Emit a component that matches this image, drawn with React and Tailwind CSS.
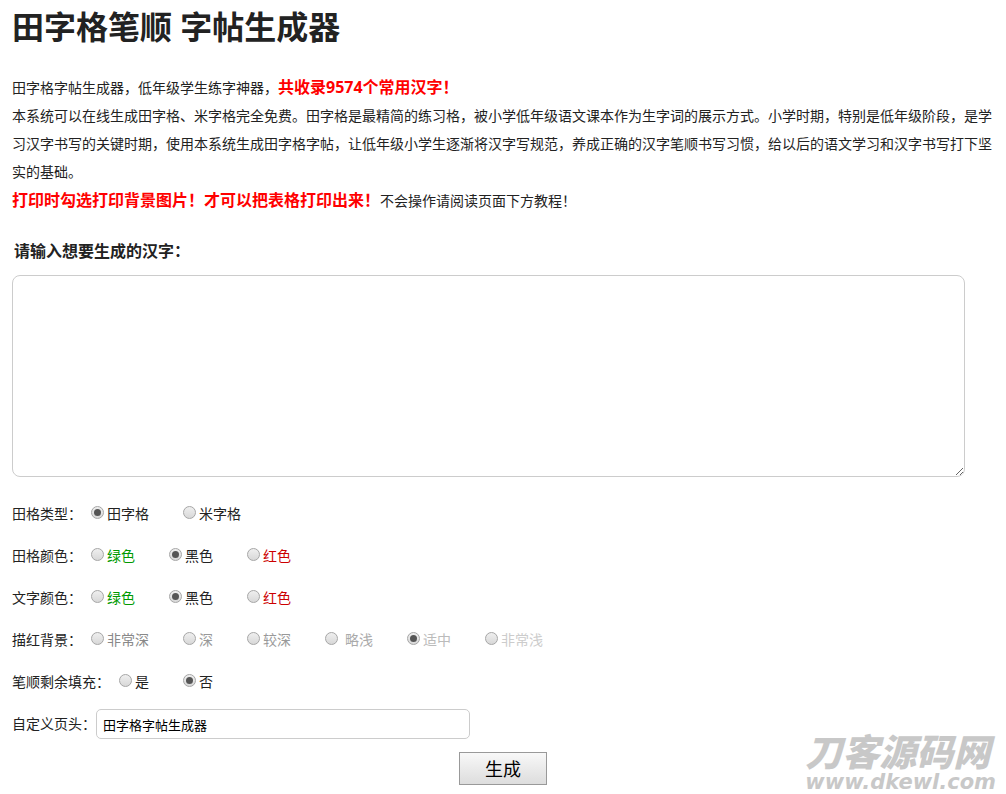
import React, { useState } from "react";

const PAGE_FONT = "font-['Noto_Sans','Noto_Sans_CJK_SC',sans-serif]";

const GROUPS = [
  {
    name: "gridType",
    label: "田格类型：",
    options: [
      { value: "tian", text: "田字格" },
      { value: "mi", text: "米字格" },
    ],
  },
  {
    name: "gridColor",
    label: "田格颜色：",
    options: [
      { value: "green", text: "绿色", color: "text-[#009900]" },
      { value: "black", text: "黑色" },
      { value: "red", text: "红色", color: "text-[#cc0000]" },
    ],
  },
  {
    name: "textColor",
    label: "文字颜色：",
    options: [
      { value: "green", text: "绿色", color: "text-[#009900]" },
      { value: "black", text: "黑色" },
      { value: "red", text: "红色", color: "text-[#cc0000]" },
    ],
  },
  {
    name: "shade",
    label: "描红背景：",
    options: [
      { value: "1", text: "非常深", color: "text-[#888888]" },
      { value: "2", text: "深", color: "text-[#999999]" },
      { value: "3", text: "较深", color: "text-[#999999]" },
      { value: "4", text: "略浅", color: "text-[#aaaaaa]", spaced: true },
      { value: "5", text: "适中", color: "text-[#bbbbbb]" },
      { value: "6", text: "非常浅", color: "text-[#cccccc]" },
    ],
  },
  {
    name: "fill",
    label: "笔顺剩余填充：",
    options: [
      { value: "yes", text: "是" },
      { value: "no", text: "否" },
    ],
  },
];

function RadioRow({ group, value, onChange }) {
  return (
    <div role="radiogroup" aria-label={group.label} className="flex flex-wrap items-center min-h-[42px]">
      <span className="mr-[9px]">{group.label}</span>
      <div className="flex flex-wrap gap-x-[34px]">
        {group.options.map((o) => (
          <label key={o.value} className={`flex items-center ${o.spaced ? "gap-[7px]" : "gap-[3px]"} ${o.color || ""}`}>
            <input
              type="radio"
              name={group.name}
              value={o.value}
              checked={value === o.value}
              onChange={() => onChange(group.name, o.value)}
              className="appearance-none w-[13px] h-[13px] mb-1 shrink-0 rounded-full border border-[#a6a6a6] bg-linear-to-b from-[#efefef] to-[#d8d8d8] flex items-center justify-center checked:before:block checked:before:w-[7px] checked:before:h-[7px] checked:before:rounded-full checked:before:bg-[#555555]"
            />
            {o.text}
          </label>
        ))}
      </div>
    </div>
  );
}

export default function App() {
  const [text, setText] = useState("");
  const [title, setTitle] = useState("田字格字帖生成器");
  const [form, setForm] = useState({
    gridType: "tian",
    gridColor: "black",
    textColor: "black",
    shade: "5",
    fill: "no",
  });

  const handleChange = (name, value) => setForm({ ...form, [name]: value });

  return (
    <div lang="zh-CN" className={`relative bg-white text-[#222222] text-sm px-3 pt-[7px] pb-2 ${PAGE_FONT}`}>
      <h1 className="text-[32px] leading-10 font-bold">田字格笔顺 字帖生成器</h1>

      <p className="mt-[26px] leading-7">
        田字格字帖生成器，低年级学生练字神器，
        <b className="text-base leading-7 text-[#ff0000]">共收录9574个常用汉字！</b>
        <br />
        本系统可以在线生成田字格、米字格完全免费。田字格是最精简的练习格，被小学低年级语文课本作为生字词的展示方式。小学时期，特别是低年级阶段，是学习汉字书写的关键时期，使用本系统生成田字格字帖，让低年级小学生逐渐将汉字写规范，养成正确的汉字笔顺书写习惯，给以后的语文学习和汉字书写打下坚实的基础。
        <br />
        <b className="text-base leading-7 text-[#ff0000]">打印时勾选打印背景图片！才可以把表格打印出来！</b>
        不会操作请阅读页面下方教程！
      </p>

      <form onSubmit={(e) => e.preventDefault()}>
        <label htmlFor="words" className="block mt-6 ml-[2px] text-base leading-6 font-bold">
          请输入想要生成的汉字：
        </label>
        <textarea
          id="words"
          value={text}
          onChange={(e) => setText(e.target.value)}
          className="block mt-3 mb-4 w-[97%] h-[202px] p-2 rounded-lg border border-[#cccccc] outline-none"
        />

        {GROUPS.map((g) => (
          <RadioRow key={g.name} group={g} value={form[g.name]} onChange={handleChange} />
        ))}

        <div className="flex items-center min-h-[42px]">
          <label htmlFor="title">自定义页头：</label>
          <input
            id="title"
            type="text"
            value={title}
            onChange={(e) => setTitle(e.target.value)}
            className="w-[374px] h-[30px] px-[6px] text-[13px] text-black rounded-[5px] border border-[#cccccc] outline-none"
          />
        </div>

        <div className="mt-[7px] text-center">
          <button
            type="submit"
            className="w-[88px] h-[33px] text-lg leading-7 text-black border border-[#999999] bg-linear-to-b from-[#f8f8f8] to-[#dddddd]"
          >
            生成
          </button>
        </div>
      </form>

      {/* 右下角水印 */}
      <div className="absolute right-[10px] bottom-px italic text-[#c8c8c8] pointer-events-none select-none">
        <div className="text-[37px] leading-9 font-black font-['Liberation_Sans','Noto_Sans_CJK_SC',sans-serif]">刀客源码网</div>
        <div className="text-[21px] leading-5 font-bold font-['DejaVu_Sans',sans-serif]">www.dkewl.com</div>
      </div>
    </div>
  );
}
